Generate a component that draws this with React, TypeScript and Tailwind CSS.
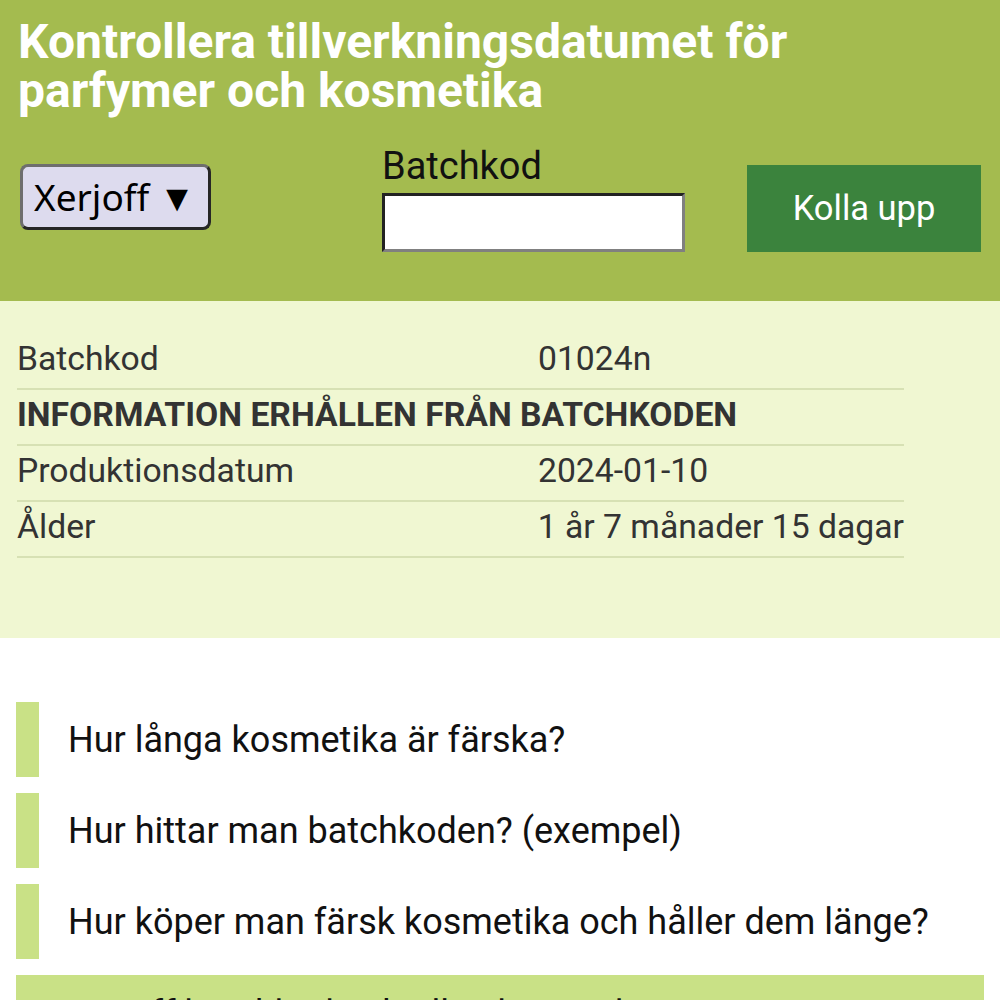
export default function App() {
  const rows = [
    { k: "Batchkod", v: "01024n" },
    { k: "INFORMATION ERHÅLLEN FRÅN BATCHKODEN", v: "", bold: true },
    { k: "Produktionsdatum", v: "2024-01-10" },
    { k: "Ålder", v: "1 år 7 månader 15 dagar" },
  ];
  const faqs = [
    "Hur långa kosmetika är färska?",
    "Hur hittar man batchkoden? (exempel)",
    "Hur köper man färsk kosmetika och håller dem länge?",
  ];
  return (
    <div className="w-[1000px] h-[1000px] overflow-hidden bg-white font-['Roboto',sans-serif]">
      <header className="bg-[#a4bb4f] px-[18px] pt-[17px] pb-[49px]">
        <h1 className="text-[48px] leading-[49px] font-bold text-white whitespace-nowrap">
          <span className="block">Kontrollera tillverkningsdatumet för</span>
          <span className="block">parfymer och kosmetika</span>
        </h1>
        <div className="flex items-start mt-[31px]">
          <div className="mt-[18px] ml-[2px] w-[191px] h-[66px] flex items-center pl-[11px] rounded-[8px] border-[3px] border-[#6e6e6e] border-r-[#262626] border-b-[#262626] bg-[#dddbee] text-[37px] text-black font-['Noto_Sans',sans-serif]">
            Xerjoff ▼
          </div>
          <div className="ml-[171px] flex flex-col">
            <label className="text-[38px] leading-[40px] text-[#111] mb-[7px] whitespace-nowrap">Batchkod</label>
            <div className="w-[303px] h-[59px] bg-white border-[3px] border-[#222] border-r-[#808080] border-b-[#808080]" />
          </div>
          <button className="ml-[62px] mt-[19px] w-[234px] h-[87px] bg-[#3b833d] text-white text-[34.5px] flex items-center justify-center">
            Kolla upp
          </button>
        </div>
      </header>

      <section className="bg-[#f0f7d2] pt-[33px] pb-[80px] px-[17px]">
        <div className="w-[887px]">
          {rows.map((r) => (
            <div
              key={r.k}
              className="flex border-b-[2px] border-[#d7e1b4] pt-[6px] pb-[10px] text-[33.7px] leading-[38px] text-[#333]"
            >
              {r.bold ? (
                <div className="font-bold text-[#333] whitespace-nowrap">{r.k}</div>
              ) : (
                <>
                  <div className="w-[521px]">{r.k}</div>
                  <div className="flex-1 whitespace-nowrap">{r.v}</div>
                </>
              )}
            </div>
          ))}
        </div>
      </section>

      <section className="px-[16px] pt-[64px] flex flex-col gap-[16px]">
        {faqs.map((f) => (
          <div
            key={f}
            className="h-[75px] flex items-center border-l-[23px] border-[#c9e186] pl-[29px] text-[36px] leading-[42px] text-[#111] whitespace-nowrap"
          >
            {f}
          </div>
        ))}
        <div className="bg-[#c9e186] h-[75px] pl-[52px] pt-[18px] text-[36px] leading-[42px] text-[#111] whitespace-nowrap">
          Xerjoff batchkod och tillverkningsdatum
        </div>
      </section>
    </div>
  );
}
